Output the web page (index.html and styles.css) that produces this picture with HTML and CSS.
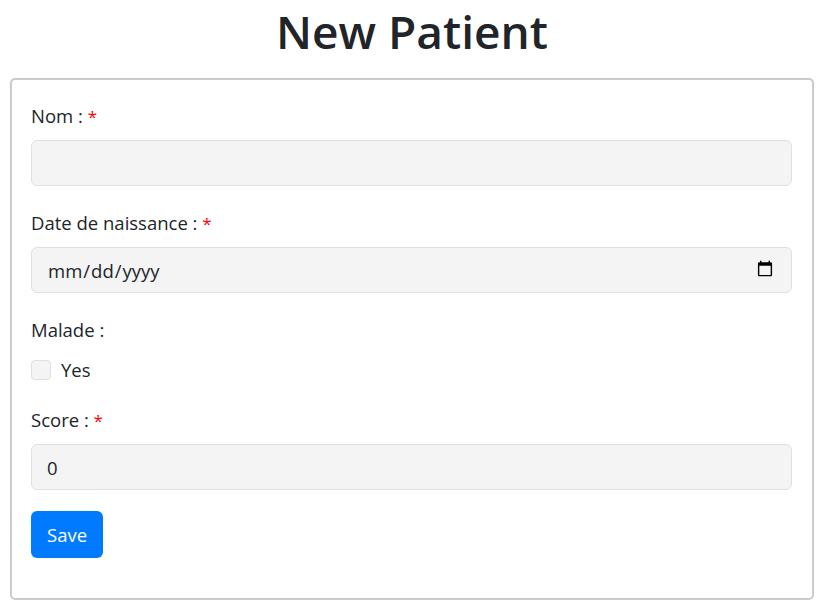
FILE: index.html
```html
<!DOCTYPE html>
<html lang="fr">
<head>
<meta charset="utf-8">
<title>New Patient</title>
<link rel="stylesheet" href="styles.css">
</head>
<body>
<h1 class="title">New Patient</h1>
<form class="card">
  <div class="group">
    <label class="label" for="nom">Nom : <span class="req">*</span></label>
    <input class="field" id="nom" type="text">
  </div>
  <div class="group">
    <label class="label" for="dob">Date de naissance : <span class="req">*</span></label>
    <input class="field" id="dob" type="date">
  </div>
  <div class="group">
    <div class="label label-check">Malade :</div>
    <label class="check-row"><input class="check" type="checkbox"><span>Yes</span></label>
  </div>
  <div class="group">
    <label class="label" for="score">Score : <span class="req">*</span></label>
    <input class="field" id="score" type="number" value="0">
  </div>
  <button class="btn" type="button">Save</button>
</form>
</body>
</html>
```

FILE: styles.css
```css
html, body {
  margin: 0;
  padding: 0;
  background: #fff;
}
body {
  font-family: "Open Sans", "Noto Sans", sans-serif;
  font-size: 18.5px;
  color: #212529;
  padding: 0 9px 0 10px;
}
.title {
  margin: 0 0 16px;
  font-size: 46px;
  line-height: 62px;
  font-weight: 600;
  text-align: center;
}
.card {
  display: flex;
  flex-direction: column;
  align-items: flex-start;
  border: 2px solid #cbcbcb;
  border-radius: 5px;
  padding: 22px 20px 41px 19px;
  height: 522px;
  box-sizing: border-box;
}
.group {
  display: flex;
  flex-direction: column;
  align-self: stretch;
  margin-bottom: 23px;
}
.label {
  display: block;
  height: 27px;
  line-height: 27px;
  margin-bottom: 11px;
}
.label-check {
  margin-bottom: 13px;
}
.req {
  color: #ff0000;
  font-size: 17px;
  line-height: 1;
}
.field {
  box-sizing: border-box;
  height: 46px;
  width: 100%;
  margin: 0;
  padding: 0 15px;
  font-family: inherit;
  font-size: 18.5px;
  color: #212529;
  background: #f4f4f4;
  border: 1px solid #dfe0e3;
  border-radius: 6px;
  outline: none;
}
.field::-webkit-calendar-picker-indicator {
  width: 18px;
  height: 20px;
  margin-right: 0;
}
.check-row {
  display: flex;
  align-items: center;
  gap: 10px;
  height: 27px;
}
.check {
  appearance: none;
  -webkit-appearance: none;
  margin: 0;
  width: 20px;
  height: 20px;
  box-sizing: border-box;
  background: #f4f4f4;
  border: 1px solid #dfe0e3;
  border-radius: 4px;
}
.btn {
  flex-shrink: 0;
  margin-top: -2px;
  height: 47px;
  padding: 0 16px;
  font-family: inherit;
  font-size: 18.5px;
  color: #fff;
  background: #007bff;
  border: none;
  border-radius: 6px;
}
```
